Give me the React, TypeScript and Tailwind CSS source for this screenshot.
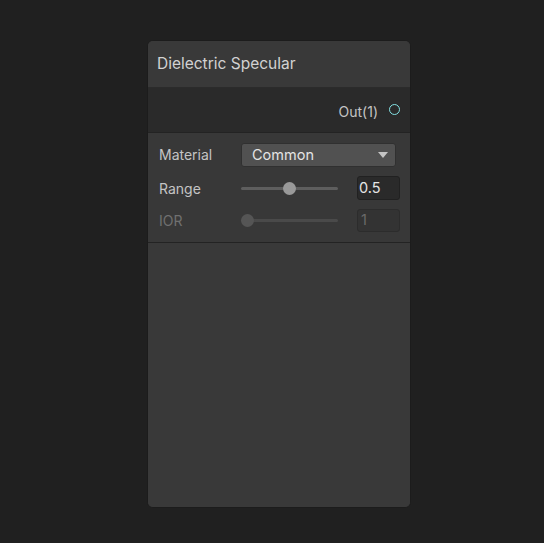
export default function App() {
  return (
    <main className="min-h-[543px] w-full bg-[#202020] pt-10 pl-[147px]" style={{ fontFamily: 'Inter, "Noto Sans", sans-serif' }}>
      <div className="w-[264px] h-[468px] rounded-md bg-[#393939] border border-[#1c1c1c] overflow-hidden flex flex-col">
        {/* header */}
        <div className="h-[46px] flex items-center px-[9px] pb-[1px] text-[15.5px] text-[#d2d2d2] bg-[#393939]">
          Dielectric Specular
        </div>
        <div className="h-px bg-[#2b2b2b]" />
        {/* output port */}
        <div className="h-[44px] bg-[#2a2a2a] flex items-center justify-end pr-[10px] gap-[11px] text-[14px] text-[#c4c4c4]">
          <span className="mt-[2px]">Out(1)</span>
          <span className="w-[11px] h-[11px] rounded-full border-[1.5px] border-[#84e2e4] -mt-[1px]" />
        </div>
        <div className="h-px bg-[#232323]" />
        {/* properties */}
        <div className="bg-[#383838] pt-[10px] pb-[10px] px-[11px] flex flex-col text-[14px]">
          <div className="flex items-center h-[24px]">
            <span className="w-[82px] text-[#c4c4c4] -mt-[2px]">Material</span>
            <div className="flex-1 mr-[3px] h-[24px] rounded-[3px] bg-[#515151] border border-[#303030] flex items-center justify-between pl-[10px] pr-[7px] text-[14.5px] text-[#e4e4e4]">
              <span className="-mt-[1px]">Common</span>
              <svg width="10" height="6" viewBox="0 0 10 6"><path d="M0 0h10L5 6z" fill="#c4c4c4" /></svg>
            </div>
          </div>
          <div className="flex items-center h-[24px] mt-[9px]">
            <span className="w-[82px] text-[#c4c4c4]">Range</span>
            <div className="relative w-[97px] h-[13px] flex items-center">
              <div className="w-full h-[3px] bg-[#5e5e5e] rounded" />
              <div className="absolute left-[42px] top-0 w-[13px] h-[13px] rounded-full bg-[#999999]" />
            </div>
            <div className="ml-auto mr-[-1px] w-[43px] h-[24px] rounded-[3px] bg-[#2a2a2a] border border-[#212121] flex items-center pl-[1px] text-[14.5px] text-[#e4e4e4]">0.5</div>
          </div>
          <div className="flex items-center h-[24px] mt-[8px]">
            <span className="w-[82px] text-[#707070]">IOR</span>
            <div className="relative w-[97px] h-[13px] flex items-center">
              <div className="w-full h-[3px] bg-[#4a4a4a] rounded" />
              <div className="absolute left-0 top-0 w-[13px] h-[13px] rounded-full bg-[#555555]" />
            </div>
            <div className="ml-auto mr-[-1px] w-[43px] h-[23px] rounded-[3px] bg-[#333333] border border-[#2c2c2c] flex items-center pl-[3px] text-[14.5px] text-[#6a6a6a]">1</div>
          </div>
        </div>
        <div className="h-px bg-[#232323]" />
        <div className="flex-1 bg-[#393939]" />
      </div>
    </main>
  );
}
